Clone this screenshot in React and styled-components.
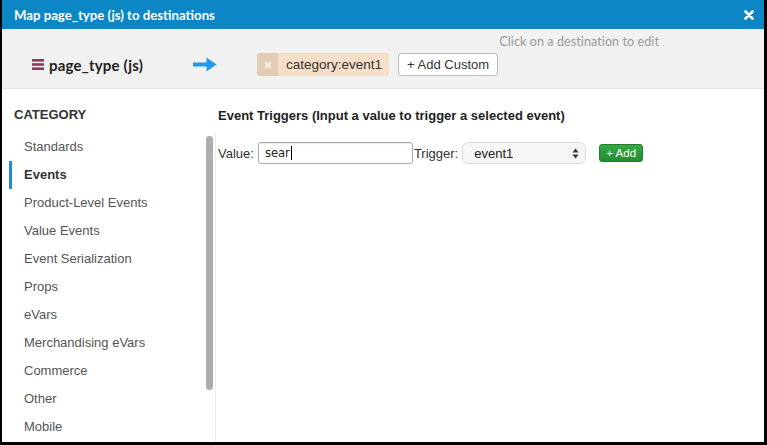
import React from "react";
import styled, { createGlobalStyle } from "styled-components";

const Global = createGlobalStyle`
  html, body { margin: 0; padding: 0; background: #000; }
  * { box-sizing: border-box; }
`;

const Frame = styled.div`
  width: 767px;
  height: 445px;
  padding: 0 3px 3px 2px;
  background: #000;
`;

const Modal = styled.div`
  height: 100%;
  display: flex;
  flex-direction: column;
  background: #fff;
  font-family: "Liberation Sans", Arial, sans-serif;
  color: #333;
`;

const Header = styled.div`
  height: 29px;
  flex: none;
  display: flex;
  align-items: center;
  justify-content: space-between;
  padding: 0 10px 0 12px;
  background: #0c86c4;
  color: #fff;
`;

const Title = styled.div`
  font-family: Lato, "Open Sans", sans-serif;
  font-weight: 700;
  font-size: 13.2px;
`;

const Close = styled.svg`
  width: 10px;
  height: 10px;
  display: block;
`;

const MapBar = styled.div`
  flex: none;
  display: flex;
  align-items: flex-end;
  height: 60px;
  padding: 0 0 12px 30px;
  background: #f1f1f1;
  border-bottom: 1px solid #e3e3e3;
`;

const Source = styled.div`
  display: flex;
  align-items: center;
  gap: 5px;
  height: 23px;
  width: 161px;
  font-family: Lato, sans-serif;
  font-weight: 700;
  font-size: 15px;
  letter-spacing: 0.2px;
  color: #222;
`;

const Arrow = styled.svg`
  width: 24px;
  height: 23px;
  display: block;
  margin-right: 40px;
`;

const Destinations = styled.div`
  width: 402px;
  display: flex;
  flex-direction: column;
  gap: 4px;
`;

const Hint = styled.div`
  align-self: flex-end;
  font-family: Lato, sans-serif;
  font-size: 12.5px;
  letter-spacing: 0.1px;
  line-height: 15px;
  color: #9a9a9a;
`;

const TagRow = styled.div`
  display: flex;
  align-items: center;
  gap: 9px;
`;

const Tag = styled.div`
  display: flex;
  height: 23px;
  border-radius: 3px;
  overflow: hidden;
  background: #f6dfc8;
  font-size: 13.5px;
  color: #333;
`;

const TagRemove = styled.div`
  width: 21px;
  display: flex;
  align-items: center;
  justify-content: center;
  background: #e3ccb6;
`;

const TagLabel = styled.div`
  display: flex;
  align-items: center;
  padding: 0 7px 0 8px;
`;

const Button = styled.div`
  height: 23px;
  display: flex;
  align-items: center;
  padding: 0 8px;
  background: #fff;
  border: 1px solid #bcbcbc;
  border-radius: 3px;
  font-size: 13px;
  color: #333;
`;

const Body = styled.div`
  flex: 1;
  display: flex;
  min-height: 0;
`;

const Sidebar = styled.div`
  width: 214px;
  flex: none;
  display: flex;
  flex-direction: column;
`;

const SectionTitle = styled.div`
  font-weight: 700;
  font-size: 13px;
  line-height: 16px;
  color: ${(p) => p.$color || "#333"};
  padding: ${(p) => p.$pad};
`;

const ListArea = styled.div`
  flex: 1;
  position: relative;
  overflow: hidden;
  border-right: 1px solid #ececec;
  margin-top: 10px;
`;

const Item = styled.div`
  position: relative;
  height: 28px;
  line-height: 28px;
  padding-left: 22px;
  font-size: 13px;
  font-weight: ${(p) => (p.$active ? 700 : 400)};
  color: ${(p) => (p.$active ? "#333" : "#555")};
  &::before {
    content: "";
    display: ${(p) => (p.$active ? "block" : "none")};
    position: absolute;
    left: 7px;
    top: 0;
    width: 3px;
    height: 28px;
    background: #1b8ecf;
  }
`;

const Thumb = styled.div`
  position: absolute;
  right: 2px;
  top: 3px;
  width: 7px;
  height: 254px;
  border-radius: 4px;
  background: #adadad;
`;

const Main = styled.div`
  flex: 1;
  padding: 0 0 0 2px;
`;

const TriggerRow = styled.div`
  display: flex;
  align-items: center;
  margin-top: 18px;
  font-size: 13px;
  color: #333;
`;

const Label = styled.span`
  margin-right: ${(p) => p.$gap || 0}px;
`;

const ValueBox = styled.div`
  width: 155px;
  height: 22px;
  display: flex;
  align-items: center;
  padding-left: 6px;
  border: 1px solid #a9a9a9;
  border-radius: 3px;
  box-shadow: inset 0 1px 1px rgba(0, 0, 0, 0.08);
  font-family: "DejaVu Sans", sans-serif;
  font-size: 11.5px;
  color: #222;
  margin-right: 1px;
`;

const Caret = styled.span`
  display: inline-block;
  width: 1px;
  height: 14px;
  background: #000;
  margin-left: 1px;
`;

const Select = styled.div`
  width: 124px;
  height: 22px;
  display: flex;
  align-items: center;
  justify-content: space-between;
  padding: 0 6px 0 11px;
  background: #f6f6f6;
  border: 1px solid #dcdcdc;
  border-radius: 6px;
  font-size: 13px;
  color: #222;
  margin-right: 13px;
`;

const AddButton = styled.div`
  width: 44px;
  height: 18px;
  display: flex;
  align-items: center;
  justify-content: center;
  background: linear-gradient(#36a845, #238c33);
  border: 1px solid #1f7f2d;
  border-radius: 3px;
  color: #fff;
  font-size: 11.5px;
`;

const categories = [
  "Standards",
  "Events",
  "Product-Level Events",
  "Value Events",
  "Event Serialization",
  "Props",
  "eVars",
  "Merchandising eVars",
  "Commerce",
  "Other",
  "Mobile",
];

export default function App() {
  return (
    <Frame>
      <Global />
      <Modal>
        <Header>
          <Title>Map page_type (js) to destinations</Title>
          <Close viewBox="0 0 10 10">
            <path d="M1.5 1.5 L8.5 8.5 M8.5 1.5 L1.5 8.5" stroke="#fff" strokeWidth="2.6" strokeLinecap="round" />
          </Close>
        </Header>
        <MapBar>
          <Source>
            <svg width="12" height="11" viewBox="0 0 12 11">
              <rect x="0" y="0" width="12" height="2.6" fill="#8c3a5b" />
              <rect x="0" y="4.2" width="12" height="2.6" fill="#8c3a5b" />
              <rect x="0" y="8.4" width="12" height="2.6" fill="#8c3a5b" />
            </svg>
            page_type (js)
          </Source>
          <Arrow viewBox="0 0 24 23">
            <path d="M0 11.5 H18" stroke="#1d9be8" strokeWidth="4" />
            <path d="M13.5 4.5 L23.5 11.5 L13.5 18.5 Z" fill="#1d9be8" />
          </Arrow>
          <Destinations>
            <Hint>Click on a destination to edit</Hint>
            <TagRow>
              <Tag>
                <TagRemove>
                  <svg width="8" height="8" viewBox="0 0 8 8">
                    <path d="M1 1 L7 7 M7 1 L1 7" stroke="#f5eee7" strokeWidth="2" />
                  </svg>
                </TagRemove>
                <TagLabel>category:event1</TagLabel>
              </Tag>
              <Button>+ Add Custom</Button>
            </TagRow>
          </Destinations>
        </MapBar>
        <Body>
          <Sidebar>
            <SectionTitle $pad="18px 0 0 12px">CATEGORY</SectionTitle>
            <ListArea>
              {categories.map((c) => (
                <Item key={c} $active={c === "Events"}>
                  {c}
                </Item>
              ))}
              <Thumb />
            </ListArea>
          </Sidebar>
          <Main>
            <SectionTitle $pad="19px 0 0 0" $color="#222">
              Event Triggers (Input a value to trigger a selected event)
            </SectionTitle>
            <TriggerRow>
              <Label $gap={4}>Value:</Label>
              <ValueBox>
                sear
                <Caret />
              </ValueBox>
              <Label $gap={4}>Trigger:</Label>
              <Select>
                event1
                <svg width="7" height="11" viewBox="0 0 7 11">
                  <path d="M0.5 4.5 L3.5 0.5 L6.5 4.5 Z M0.5 6.5 L3.5 10.5 L6.5 6.5 Z" fill="#333" />
                </svg>
              </Select>
              <AddButton>+ Add</AddButton>
            </TriggerRow>
          </Main>
        </Body>
      </Modal>
    </Frame>
  );
}
